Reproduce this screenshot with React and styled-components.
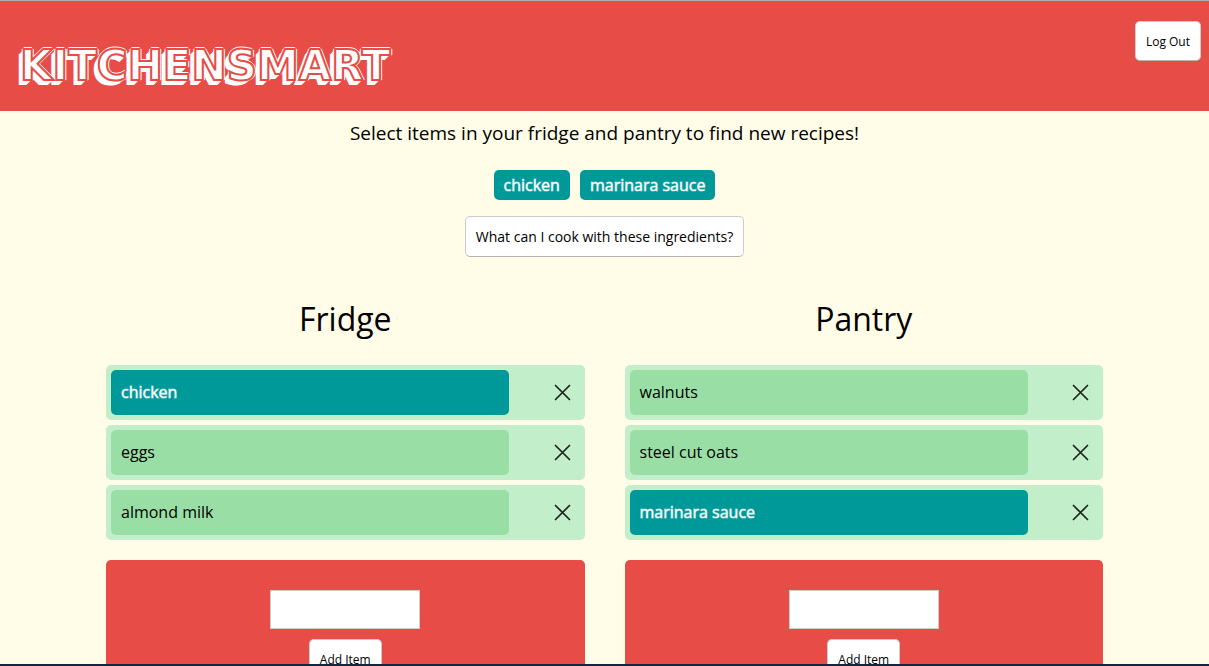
import React, { useState } from "react";
import styled, { createGlobalStyle, css } from "styled-components";

const GlobalStyle = createGlobalStyle`
  * { box-sizing: border-box; }
  html { height: 100%; overflow: hidden; }
  body {
    margin: 0;
    height: 100%;
    overflow: hidden;
    background: #fffce8;
    color: #000;
    font: 16px/24px "Open Sans", sans-serif;
  }
  #root { height: 100%; }
`;

const Page = styled.div`
  height: 100%;
  overflow: hidden;
  border-top: 1px solid #b0aeb0;
  border-bottom: 2px solid #12263f;
`;

const Header = styled.header`
  display: flex;
  justify-content: space-between;
  align-items: flex-start;
  height: 110px;
  padding: 20px 8px 0 20px;
  background: #e84c46;
`;

const Logo = styled.h1`
  margin: 19px 0 0;
  font: bold 42px/52px "DejaVu Sans", sans-serif;
  text-transform: uppercase;
  color: #fff;
  -webkit-text-stroke: 2px #e84c46;
  text-shadow: 1px -1px #fff, -1px -1px #fff, 1px 1px #fff, -1px 1px #fff,
    2px 0 #fff, -2px 0 #fff, 0 -2px #fff,
    -2px 2px #fff, -3px 3px #fff, -4px 4px #fff, -5px 5px #fff;
`;

const Button = styled.button`
  height: ${(p) => (p.$large ? 41 : 40)}px;
  padding: 0 10px;
  border: 1px solid #ccc;
  border-bottom-color: #b3b3b3;
  border-radius: 5px;
  background: #fff;
  color: #000;
  font: ${(p) => (p.$large ? 14 : 12)}px "Open Sans", sans-serif;
`;

const Finder = styled.section`
  display: flex;
  flex-direction: column;
  align-items: center;
`;

const Intro = styled.p`
  margin: 10px 0 24px;
  font-size: 19px;
  line-height: 25px;
`;

const Chips = styled.ul`
  display: flex;
  gap: 10px;
  margin: 0 0 16px;
  padding: 0;
  list-style: none;
`;

const selected = css`
  background: #009999;
  color: #fff;
  -webkit-text-stroke: 1px rgba(255, 255, 255, 0.5);
`;

const Chip = styled.li`
  padding: 0 10px;
  border-radius: 5px;
  line-height: 30px;
  ${selected}
`;

const Shelves = styled.main`
  display: grid;
  grid-template-columns: 1fr 1fr;
  gap: 40px;
  margin: 38px 106px 0;
`;

const Title = styled.h2`
  margin: 0 0 22px;
  font-size: 32px;
  font-weight: 400;
  line-height: 48px;
  text-align: center;
`;

const Items = styled.ul`
  display: grid;
  gap: 5px;
  margin: 0 0 20px;
  padding: 0;
  list-style: none;
`;

const Item = styled.li`
  display: flex;
  justify-content: space-between;
  padding: 5px;
  border-radius: 5px;
  background: #c3eeca;
`;

const ItemName = styled.button`
  width: 85%;
  height: 45px;
  padding: 0 10px 2px;
  border: 0;
  border-radius: 5px;
  background: #99dfa5;
  color: #000;
  font: inherit;
  text-align: left;
  ${(p) => p.$on && selected}
`;

const Remove = styled.button`
  display: flex;
  align-items: center;
  padding: 0 8px;
  border: 0;
  background: none;
`;

const AddForm = styled.form`
  display: flex;
  flex-direction: column;
  align-items: center;
  gap: 10px;
  padding: 30px;
  border-radius: 5px;
  background: #e84c46;
`;

const Field = styled.input`
  width: 150px;
  height: 39px;
  padding: 0 10px;
  border: 1px solid #ccc;
  background: #fff;
  font: inherit;
`;

const Cross = () => (
  <svg width="18" height="18" viewBox="0 0 18 18" aria-hidden="true">
    <path d="M1.5 1.5 15.5 15.5M15.5 1.5 1.5 15.5" stroke="#1d241e" strokeWidth="1.7" strokeLinecap="round" />
  </svg>
);

const Shelf = ({ name, items, chosen, onToggle }) => (
  <section>
    <Title>{name}</Title>
    <Items>
      {items.map((item) => (
        <Item key={item}>
          <ItemName $on={chosen.includes(item)} aria-pressed={chosen.includes(item)} onClick={() => onToggle(item)}>
            {item}
          </ItemName>
          <Remove aria-label={`Remove ${item}`}><Cross /></Remove>
        </Item>
      ))}
    </Items>
    <AddForm onSubmit={(e) => e.preventDefault()}>
      <Field type="text" aria-label={`Add to ${name}`} />
      <Button>Add Item</Button>
    </AddForm>
  </section>
);

export default function App() {
  const [chosen, setChosen] = useState(["chicken", "marinara sauce"]);
  const toggle = (item) =>
    setChosen((c) => (c.includes(item) ? c.filter((i) => i !== item) : [...c, item]));

  return (
    <Page>
      <GlobalStyle />
      <Header>
        <Logo>KitchenSmart</Logo>
        <Button>Log Out</Button>
      </Header>
      <Finder>
        <Intro>Select items in your fridge and pantry to find new recipes!</Intro>
        <Chips>{chosen.map((item) => <Chip key={item}>{item}</Chip>)}</Chips>
        <Button $large>What can I cook with these ingredients?</Button>
      </Finder>
      <Shelves>
        <Shelf name="Fridge" items={["chicken", "eggs", "almond milk"]} chosen={chosen} onToggle={toggle} />
        <Shelf name="Pantry" items={["walnuts", "steel cut oats", "marinara sauce"]} chosen={chosen} onToggle={toggle} />
      </Shelves>
    </Page>
  );
}
